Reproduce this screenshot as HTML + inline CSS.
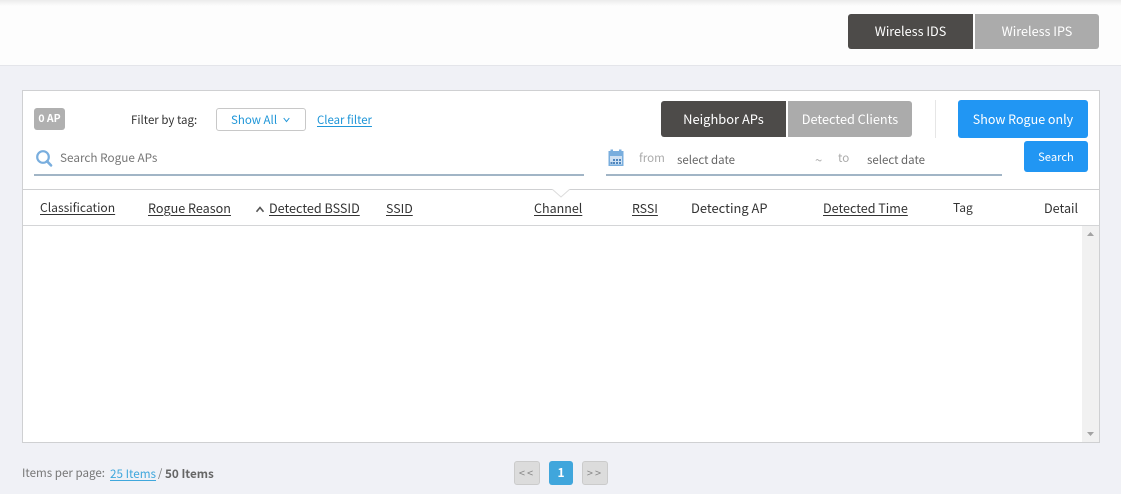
<!DOCTYPE html>
<html><head><meta charset="utf-8">
<style>
html,body{margin:0;padding:0}
body{width:1121px;height:494px;background:#f0f1f6;position:relative;overflow:hidden;font-family:"Noto Sans CJK JP","Liberation Sans",sans-serif;color:#333}
.a{position:absolute;white-space:nowrap}
.btn{position:absolute;color:#fff;text-align:center;box-sizing:border-box}
.h{position:absolute;top:199px;font-size:12.6px;line-height:18px;color:#333;white-space:nowrap}
.u{text-decoration:underline;text-underline-offset:2px}
</style></head><body>
<div class="a" style="left:0;top:0;width:1121px;height:65px;background:#fdfdfd;border-bottom:1px solid #e4e5ea"></div>
<div class="a" style="left:0;top:0;width:1121px;height:6px;background:linear-gradient(#ececec,#fdfdfd)"></div>
<div class="btn" style="left:848px;top:14px;width:125px;height:35px;background:#4d4b49;border-radius:3px 0 0 3px;font-size:12.65px;line-height:34px">Wireless IDS</div>
<div class="btn" style="left:975px;top:14px;width:124px;height:35px;background:#ababab;border-radius:0 3px 3px 0;font-size:12.65px;line-height:34px">Wireless IPS</div>

<div class="a" style="left:22px;top:90px;width:1078px;height:353px;box-sizing:border-box;background:#fff;border:1px solid #cfd0d2"></div>

<div class="btn" style="left:34px;top:108px;width:31px;height:22px;background:#b0b0b0;border-radius:3px;font-size:10.5px;line-height:22px;font-weight:700">0 AP</div>
<div class="a" style="left:131px;top:112px;font-size:11.5px;line-height:17px;color:#333">Filter by tag:</div>
<div class="a" style="left:216px;top:108px;width:90px;height:23px;box-sizing:border-box;background:#fff;border:1px solid #c8c8c8;border-radius:3px"></div>
<div class="a" style="left:231px;top:112px;font-size:11.5px;line-height:17px;color:#1f96d8">Show All</div>
<svg class="a" style="left:283px;top:117px" width="7" height="6" viewBox="0 0 7 6"><path d="M.7 1 3.5 4.6 6.3 1" fill="none" stroke="#1f96d8" stroke-width="1"/></svg>
<div class="a u" style="left:317px;top:112px;font-size:11.4px;line-height:17px;color:#1f96d8">Clear filter</div>

<svg class="a" style="left:35px;top:149px" width="18" height="18" viewBox="0 0 18 18"><circle cx="8" cy="8" r="5.8" fill="none" stroke="#79aede" stroke-width="2.2"/><path d="M12 12.2 16 16.4" stroke="#79aede" stroke-width="2.6" stroke-linecap="round"/></svg>
<div class="a" style="left:60px;top:149px;font-size:11.75px;line-height:17px;color:#777">Search Rogue APs</div>
<div class="a" style="left:34px;top:174px;width:550px;height:2px;background:#a1b5c6"></div>

<div class="btn" style="left:661px;top:101px;width:125px;height:36px;background:#4d4b49;border-radius:3px 0 0 3px;font-size:12.9px;line-height:36px">Neighbor APs</div>
<div class="btn" style="left:788px;top:101px;width:124px;height:36px;background:#ababab;border-radius:0 3px 3px 0;font-size:12.7px;line-height:36px">Detected Clients</div>
<div class="a" style="left:935px;top:100px;width:1px;height:38px;background:#e6e6e6"></div>
<div class="btn" style="left:958px;top:100px;width:130px;height:38px;background:#2196f3;border-radius:3px;font-size:12.5px;line-height:38px">Show Rogue only</div>
<div class="btn" style="left:1024px;top:141px;width:64px;height:31px;background:#2196f3;border-radius:3px;font-size:11.2px;line-height:33px">Search</div>

<svg class="a" style="left:607px;top:149px" width="18" height="18" viewBox="0 0 18 18"><rect x="1.5" y="2" width="15" height="15" fill="#79aede"/><rect x="3.5" y="0.5" width="2.5" height="3" fill="#79aede"/><rect x="12" y="0.5" width="2.5" height="3" fill="#79aede"/><rect x="3" y="7" width="12" height="8.5" fill="#cfe1f3"/><path d="M6 10h2v2H6zM9 10h2v2H9zM12 10h2v2h-2zM3.500 13H5.500v2h-2zM6 13h2v2H6zM9 13h2v2H9zM12 13h2v2h-2z" fill="#4f86bd"/></svg>
<div class="a" style="left:639px;top:150px;font-size:11.6px;line-height:17px;color:#aaa">from</div>
<div class="a" style="left:677px;top:152px;font-size:11.5px;line-height:17px;color:#666">select date</div>
<div class="a" style="left:815px;top:151px;font-size:13px;line-height:17px;color:#aaa">~</div>
<div class="a" style="left:838px;top:150px;font-size:11.6px;line-height:17px;color:#aaa">to</div>
<div class="a" style="left:867px;top:152px;font-size:11.5px;line-height:17px;color:#666">select date</div>
<div class="a" style="left:606px;top:174px;width:396px;height:2px;background:#a1b5c6"></div>

<div class="a" style="left:23px;top:189px;width:1076px;height:1px;background:#cfd0d2"></div>
<div class="a" style="left:23px;top:225px;width:1076px;height:1px;background:#d4d5d7"></div>
<svg class="a" style="left:551px;top:189px" width="20" height="9" viewBox="0 0 20 9"><path d="M1 0 10 8 19 0" fill="#fff" stroke="#dcdcdc" stroke-width="1"/><path d="M0 0H20" stroke="#fff" stroke-width="1" transform="translate(0 -.5)"/></svg>

<div class="h u" style="left:40px;font-size:12.1px">Classification</div>
<div class="h u" style="left:148px">Rogue Reason</div>
<svg class="a" style="left:255px;top:205px" width="10" height="8" viewBox="0 0 10 8"><path d="M1.500 6.800 5 2.500 8.500 6.800" fill="none" stroke="#555" stroke-width="1.600"/></svg>
<div class="h u" style="left:269px">Detected BSSID</div>
<div class="h u" style="left:386px;font-size:12.4px">SSID</div>
<div class="h u" style="left:534px;font-size:12.5px">Channel</div>
<div class="h u" style="left:632px;font-size:12.4px">RSSI</div>
<div class="h" style="left:691px;font-size:12.9px">Detecting AP</div>
<div class="h u" style="left:823px;font-size:12.55px">Detected Time</div>
<div class="h" style="left:953px;font-size:12px">Tag</div>
<div class="h" style="left:1044px;font-size:12.6px">Detail</div>

<div class="a" style="left:1082px;top:226px;width:17px;height:216px;background:#f1f1f1"></div>
<svg class="a" style="left:1086px;top:231px" width="9" height="6" viewBox="0 0 9 6"><path d="M4.500 1 8 5H1z" fill="#a3a3a3"/></svg>
<svg class="a" style="left:1086px;top:431px" width="9" height="6" viewBox="0 0 9 6"><path d="M1 1H8L4.500 5z" fill="#a3a3a3"/></svg>

<div class="a" style="left:22px;top:465px;font-size:11.6px;line-height:17px;color:#777">Items per page:</div>
<div class="a u" style="left:110px;top:465px;font-size:11.7px;line-height:17px;color:#3fa7dc">25 Items</div>
<div class="a" style="left:158px;top:465px;font-size:11px;line-height:17px;color:#777">/</div>
<div class="a" style="left:165px;top:465px;font-size:11.7px;line-height:17px;color:#666;font-weight:700">50 Items</div>
<div class="btn" style="left:514px;top:461px;width:26px;height:24px;background:#dcdcdc;border:1px solid #cbcbcb;border-radius:3px;color:#888;font-size:11px;line-height:22px;letter-spacing:2px">&lt;&lt;</div>
<div class="btn" style="left:549px;top:461px;width:24px;height:24px;background:#40a6dc;border-radius:3px;font-size:12px;line-height:24px;font-weight:700">1</div>
<div class="btn" style="left:582px;top:461px;width:26px;height:24px;background:#dcdcdc;border:1px solid #cbcbcb;border-radius:3px;color:#888;font-size:11px;line-height:22px;letter-spacing:2px">&gt;&gt;</div>
</body></html>
